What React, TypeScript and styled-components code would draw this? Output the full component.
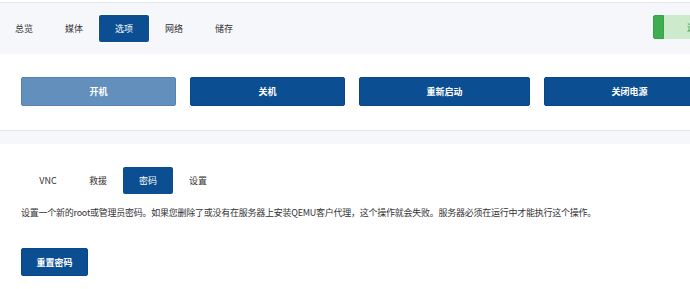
import styled, { createGlobalStyle } from "styled-components";

const GlobalStyle = createGlobalStyle`
  html, body {
    margin: 0;
    padding: 0;
    background: #ffffff;
    overflow: hidden;
  }
  body {
    font-family: "Noto Sans CJK SC", "Noto Sans", sans-serif;
    color: #333333;
  }
`;

const Page = styled.div`
  width: 690px;
  height: 289px;
  padding-top: 2px;
  box-sizing: border-box;
  overflow: hidden;
`;

const TopBar = styled.div`
  height: 52px;
  border-top: 1px solid #e6e8ec;
  background: #f6f7fb;
  display: flex;
  align-items: flex-start;
  justify-content: space-between;
  padding-top: 12px;
  box-sizing: border-box;
`;

const Tabs = styled.div`
  display: flex;
  margin-left: ${(p: { offset: number }) => p.offset}px;
`;

const Tab = styled.div`
  width: 50px;
  height: 27px;
  display: flex;
  align-items: center;
  justify-content: center;
  font-size: 9px;
  border-radius: 2px;
  color: ${(p: { active?: boolean }) => (p.active ? "#ffffff" : "#333333")};
  background: ${(p: { active?: boolean }) => (p.active ? "#0b4f92" : "transparent")};
  box-shadow: ${(p: { active?: boolean }) =>
    p.active ? "0 0 0 1px #ffffff" : "none"};
`;

const Badge = styled.div`
  width: 37px;
  height: 24px;
  display: flex;
  overflow: hidden;
  flex-shrink: 0;
`;

const BadgeMark = styled.div`
  width: 11px;
  flex-shrink: 0;
  background: #3fae50;
  border-radius: 2px 0 0 2px;
  border: 1px solid #37a347;
  box-sizing: border-box;
`;

const BadgeBody = styled.div`
  flex-shrink: 0;
  width: 26px;
  overflow: hidden;
  background: #cdeacc;
  color: #2c9a3d;
  font-size: 9px;
  display: flex;
  align-items: center;
  padding-left: 23px;
  box-sizing: border-box;
  white-space: nowrap;
`;

const ActionPanel = styled.div`
  height: 76px;
  padding: 23px 0 0 21px;
  box-sizing: border-box;
  display: flex;
  gap: 14px;
  overflow: hidden;
`;

const PowerButton = styled.button`
  flex-shrink: 0;
  width: ${(p: { wide?: boolean; disabled?: boolean }) => (p.wide ? 171 : 155)}px;
  height: 29px;
  border-radius: 2px;
  border: 1px solid
    ${(p: { wide?: boolean; disabled?: boolean }) => (p.disabled ? "#5583b4" : "#084788")};
  background: ${(p: { wide?: boolean; disabled?: boolean }) =>
    p.disabled ? "#638fbd" : "#0b4f92"};
  color: #ffffff;
  font-family: inherit;
  font-size: 9px;
  font-weight: 700;
  padding: 0;
  cursor: pointer;
`;

const Divider = styled.div`
  height: 13px;
  border-top: 1px solid #e4e6ec;
  background: #f6f7fb;
`;

const Content = styled.div`
  padding: 23px 0 0 21px;
`;

const Description = styled.p`
  margin: 13px 0 0 0;
  font-size: 9px;
  line-height: 12px;
  letter-spacing: -0.25px;
  color: #333333;
  white-space: nowrap;
`;

const ResetButton = styled.button`
  margin-top: 29px;
  width: 67px;
  height: 28px;
  border-radius: 2px;
  border: 1px solid #084788;
  background: #0b4f92;
  color: #ffffff;
  font-family: inherit;
  font-size: 9px;
  font-weight: 700;
  padding: 0;
  cursor: pointer;
`;

const topTabs = ["总览", "媒体", "选项", "网络", "储存"];
const subTabs = ["VNC", "救援", "密码", "设置"];

export default function App() {
  return (
    <>
      <GlobalStyle />
      <Page>
        <TopBar>
          <Tabs offset={-1}>
            {topTabs.map((t) => (
              <Tab key={t} active={t === "选项"}>
                {t}
              </Tab>
            ))}
          </Tabs>
          <Badge>
            <BadgeMark />
            <BadgeBody>运</BadgeBody>
          </Badge>
        </TopBar>
        <ActionPanel>
          <PowerButton disabled>开机</PowerButton>
          <PowerButton>关机</PowerButton>
          <PowerButton wide>重新启动</PowerButton>
          <PowerButton wide>关闭电源</PowerButton>
        </ActionPanel>
        <Divider />
        <Content>
          <Tabs offset={2}>
            {subTabs.map((t) => (
              <Tab key={t} active={t === "密码"}>
                {t}
              </Tab>
            ))}
          </Tabs>
          <Description>
            设置一个新的root或管理员密码。如果您删除了或没有在服务器上安装QEMU客户代理，这个操作就会失败。服务器必须在运行中才能执行这个操作。
          </Description>
          <ResetButton>重置密码</ResetButton>
        </Content>
      </Page>
    </>
  );
}
